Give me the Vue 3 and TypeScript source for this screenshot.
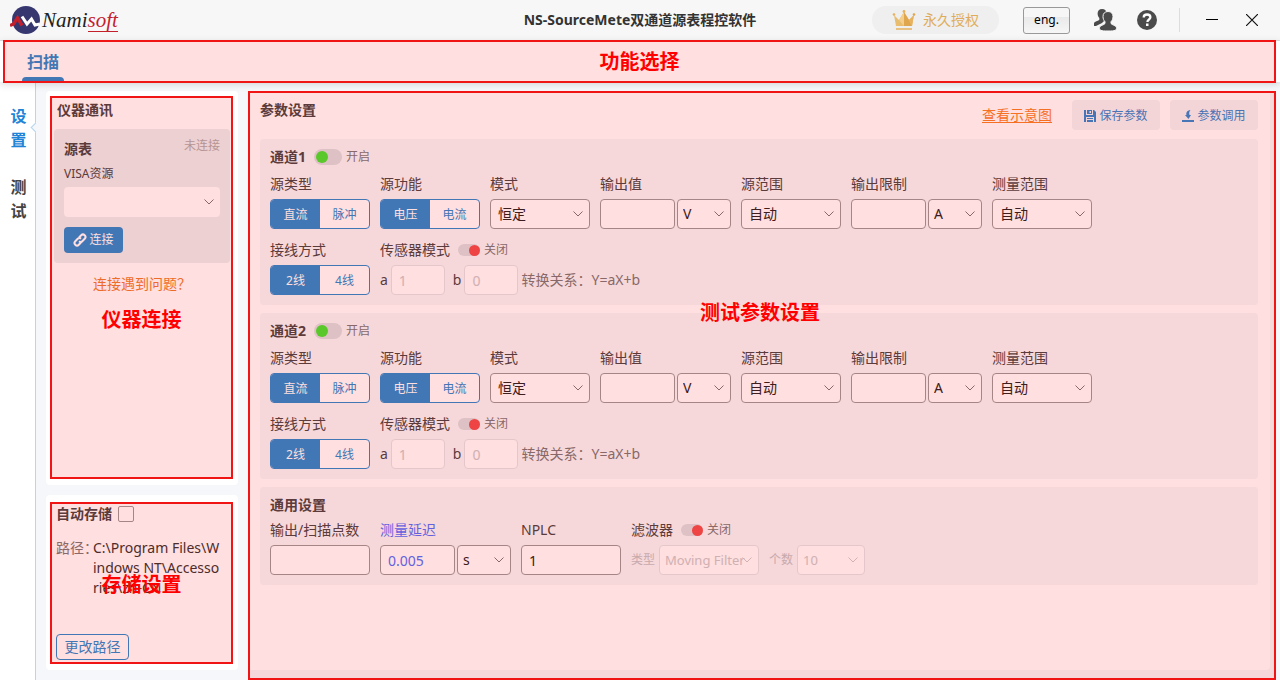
<script setup lang="ts">
import { reactive, ref } from 'vue'

interface Channel {
  id: number
  enabled: boolean
  sourceType: string
  sourceFunction: string
  mode: string
  output: string
  outputUnit: string
  sourceRange: string
  limit: string
  limitUnit: string
  measureRange: string
  wiring: string
  sensorOff: boolean
  a: string
  b: string
}

const createChannel = (id: number): Channel => ({
  id,
  enabled: true,
  sourceType: '直流',
  sourceFunction: '电压',
  mode: '恒定',
  output: '',
  outputUnit: 'V',
  sourceRange: '自动',
  limit: '',
  limitUnit: 'A',
  measureRange: '自动',
  wiring: '2线',
  sensorOff: true,
  a: '1',
  b: '0',
})

const channels = reactive<Channel[]>([createChannel(1), createChannel(2)])

const general = reactive({
  points: '',
  delay: '0.005',
  delayUnit: 's',
  nplc: '1',
  filterOff: true,
  filterType: 'Moving Filter',
  filterCount: '10',
})

const views = ['设置', '测试']
const activeView = ref('设置')
const visa = ref('')
const autoSave = ref(false)
const savePath = 'C:\\Program Files\\Windows NT\\Accessories\\zh-CN'
</script>

<template>
  <div class="app">
    <header class="titlebar">
      <div class="brand">
        <svg class="brand-mark" viewBox="0 0 32 30" width="32" height="30" aria-hidden="true">
          <circle cx="16" cy="15" r="14" fill="#36376f" />
          <path d="M12 11.500 L17 19 L21.500 14 L25 20 L30 19" fill="none" stroke="#fff" stroke-width="3" />
          <path d="M0 20.500 L3.500 19 L7.500 13 L12 20.500" fill="none" stroke="#c4202b" stroke-width="3.400" />
        </svg>
        <span class="brand-name">Nami<span class="brand-accent">soft</span></span>
      </div>
      <h1 class="title">NS-SourceMete双通道源表程控软件</h1>
      <div class="tools">
        <span class="license">
          <svg viewBox="0 0 24 22" width="24" height="22" aria-hidden="true">
            <path d="M2 6 L7 11 L12 3 L17 11 L22 6 L20 17 H4 Z" fill="#e9bd6f" />
            <path d="M12 3 L17 11 L20 17 H12 Z" fill="#e0a64d" />
            <path d="M7 11 L12 3 V17 Z" fill="#f3cf8b" />
            <path d="M17 11 L22 6 L20 17 Z" fill="#e6b25d" />
            <path d="M4 20 H20" stroke="#e6b25d" stroke-width="1.500" />
            <circle cx="2" cy="5.500" r="1.300" fill="#e6b25d" />
            <circle cx="12" cy="2.500" r="1.400" fill="#e6b25d" />
            <circle cx="22" cy="5.500" r="1.300" fill="#e0a64d" />
          </svg>
          永久授权
        </span>
        <button class="lang" type="button">eng.</button>
        <button class="tool users" type="button" aria-label="用户">
          <svg viewBox="0 0 24 24" width="24" height="24" fill="#4b4b4b">
            <path d="M9 1c3 0 4.600 1.800 4.600 4.600 0 2-.6 3.600-1.600 4.900v1.500l-3 3-6 3H1v-2.500c0-2 4.500-2.600 5.300-3.800V10C5.200 9 4.600 7.400 4.600 5.600 4.600 2.800 6.200 1 9 1z" />
            <path d="M15 3.500c3.200 0 5 2 5 5 0 2.200-.8 4-2 5.200v1.800c.8 1.400 5.500 2 5.500 4.200 0 2.600-1 3.300-8.500 3.300s-8.500-.7-8.500-3.300c0-2.200 4.700-2.800 5.500-4.200v-1.800c-1.200-1.200-2-3-2-5.200 0-3 1.800-5 5-5z" stroke="#f7f7f7" stroke-width="1" />
          </svg>
        </button>
        <button class="tool help" type="button" aria-label="帮助">
          <svg viewBox="0 0 20 20" width="20" height="20">
            <circle cx="10" cy="10" r="10" fill="#4b4b4b" />
            <path d="M6.700 7.500C6.700 5.500 8 4.500 10 4.500s3.400 1.100 3.400 2.800c0 2.200-3 2.200-3 4.700" fill="none" stroke="#fff" stroke-width="2.300" />
            <rect x="9" y="13.500" width="2.500" height="2.500" fill="#fff" />
          </svg>
        </button>
        <span class="divider"></span>
        <button class="tool minimise" type="button" aria-label="最小化">
          <svg viewBox="0 0 12 12" width="12" height="12"><path d="M0 5.500 H12" stroke="#000" /></svg>
        </button>
        <button class="tool close" type="button" aria-label="关闭窗口">
          <svg viewBox="0 0 12 12" width="12" height="12"><path d="M0 0 L12 12 M12 0 L0 12" stroke="#111" stroke-width="1.200" /></svg>
        </button>
      </div>
    </header>

    <nav class="functions" aria-label="功能选择">
      <button class="function-tab" type="button">扫描</button>
      <div class="frame frame-functions">功能选择</div>
    </nav>

    <div class="body">
      <nav class="views" aria-label="视图">
        <button
          v-for="view in views"
          :key="view"
          type="button"
          class="view"
          :class="{ active: view === activeView }"
          @click="activeView = view"
        >{{ view }}</button>
      </nav>

      <aside class="side">
        <section class="card connection">
          <h2>仪器通讯</h2>
          <div class="device">
            <div class="device-head">
              <h3>源表</h3>
              <span>未连接</span>
            </div>
            <label class="visa-label" for="visa">VISA资源</label>
            <select id="visa" v-model="visa" class="visa"><option value=""></option></select>
            <button class="connect" type="button">
              <svg viewBox="0 0 14 14" width="14" height="14" fill="none" stroke="currentColor" stroke-width="2">
                <path d="M6 4.500 L8.200 2.300 a2.400 2.400 0 0 1 3.500 3.500 L9.300 8.200 a2.400 2.400 0 0 1 -3.300 .1" />
                <path d="M8 9.500 L5.800 11.700 a2.400 2.400 0 0 1 -3.500 -3.500 L4.700 5.800 a2.400 2.400 0 0 1 3.300 -.1" />
              </svg>
              连接
            </button>
          </div>
          <a class="trouble" href="#">连接遇到问题？</a>
          <div class="frame frame-connection">仪器连接</div>
        </section>

        <section class="card storage">
          <label class="auto-save">自动存储<input v-model="autoSave" type="checkbox" class="check" /></label>
          <div class="path">
            <span class="path-label">路径：</span>
            <span class="path-value">{{ savePath }}</span>
          </div>
          <button class="change-path" type="button">更改路径</button>
          <div class="frame frame-storage">存储设置</div>
        </section>
      </aside>

      <main class="panel">
        <div class="panel-head">
          <h2>参数设置</h2>
          <a class="diagram" href="#">查看示意图</a>
          <button class="action" type="button">
            <svg viewBox="0 0 12 12" width="12" height="12" fill="currentColor">
              <path fill-rule="evenodd" d="M0 0 H2 V5 H9 V0 H10 L12 2 V12 H10 V7 H2 V12 H0 Z M3 0 H8 V4 H3 Z M5.500 1 V3 H7 V1 Z M3 8 H9 V9 H3 Z M3 10 H9 V12 H3 Z" />
            </svg>
            保存参数
          </button>
          <button class="action" type="button">
            <svg viewBox="0 0 12 12" width="12" height="12" fill="currentColor">
              <path d="M0 10 H12 V12 H0 Z M8.500 0 C4.500 .5 4 3 4.500 5 H3 L6.500 9 L9 5 H7.500 C7 3.500 7 1.500 8.500 0 Z" />
            </svg>
            参数调用
          </button>
        </div>

        <section v-for="ch in channels" :key="ch.id" class="group">
          <div class="group-title">
            <h3>通道{{ ch.id }}</h3>
            <label class="switch-label">
              <input v-model="ch.enabled" type="checkbox" class="switch large" />开启
            </label>
          </div>
          <div class="fields">
            <div class="field" role="group" aria-label="源类型">
              <span class="label">源类型</span>
              <div class="segment">
                <button v-for="o in ['直流', '脉冲']" :key="o" type="button" :class="{ on: ch.sourceType === o }" @click="ch.sourceType = o">{{ o }}</button>
              </div>
            </div>
            <div class="field" role="group" aria-label="源功能">
              <span class="label">源功能</span>
              <div class="segment">
                <button v-for="o in ['电压', '电流']" :key="o" type="button" :class="{ on: ch.sourceFunction === o }" @click="ch.sourceFunction = o">{{ o }}</button>
              </div>
            </div>
            <div class="field">
              <label class="label" :for="`mode${ch.id}`">模式</label>
              <select :id="`mode${ch.id}`" v-model="ch.mode" class="control wide"><option>恒定</option></select>
            </div>
            <div class="field">
              <label class="label" :for="`output${ch.id}`">输出值</label>
              <div class="pair">
                <input :id="`output${ch.id}`" v-model="ch.output" type="text" class="control medium" />
                <select v-model="ch.outputUnit" class="control unit" aria-label="输出单位"><option>V</option></select>
              </div>
            </div>
            <div class="field">
              <label class="label" :for="`range${ch.id}`">源范围</label>
              <select :id="`range${ch.id}`" v-model="ch.sourceRange" class="control wide"><option>自动</option></select>
            </div>
            <div class="field">
              <label class="label" :for="`limit${ch.id}`">输出限制</label>
              <div class="pair">
                <input :id="`limit${ch.id}`" v-model="ch.limit" type="text" class="control medium" />
                <select v-model="ch.limitUnit" class="control unit" aria-label="限制单位"><option>A</option></select>
              </div>
            </div>
            <div class="field">
              <label class="label" :for="`measure${ch.id}`">测量范围</label>
              <select :id="`measure${ch.id}`" v-model="ch.measureRange" class="control wide"><option>自动</option></select>
            </div>
          </div>
          <div class="fields">
            <div class="field" role="group" aria-label="接线方式">
              <span class="label">接线方式</span>
              <div class="segment">
                <button v-for="o in ['2线', '4线']" :key="o" type="button" :class="{ on: ch.wiring === o }" @click="ch.wiring = o">{{ o }}</button>
              </div>
            </div>
            <div class="field">
              <div class="label with-switch">
                传感器模式
                <label class="switch-label">
                  <input v-model="ch.sensorOff" type="checkbox" class="switch small" />关闭
                </label>
              </div>
              <div class="formula">
                <label :for="`a${ch.id}`">a</label>
                <input :id="`a${ch.id}`" v-model="ch.a" type="text" class="control coefficient" disabled />
                <label class="second" :for="`b${ch.id}`">b</label>
                <input :id="`b${ch.id}`" v-model="ch.b" type="text" class="control coefficient" disabled />
                <span class="relation">转换关系：Y=aX+b</span>
              </div>
            </div>
          </div>
        </section>

        <section class="group general">
          <div class="group-title"><h3>通用设置</h3></div>
          <div class="fields">
            <div class="field">
              <label class="label" for="points">输出/扫描点数</label>
              <input id="points" v-model="general.points" type="text" class="control wide" />
            </div>
            <div class="field">
              <label class="label accent" for="delay">测量延迟</label>
              <div class="pair">
                <input id="delay" v-model="general.delay" type="text" class="control medium accent" />
                <select v-model="general.delayUnit" class="control unit" aria-label="延迟单位"><option>s</option></select>
              </div>
            </div>
            <div class="field">
              <label class="label" for="nplc">NPLC</label>
              <input id="nplc" v-model="general.nplc" type="text" class="control wide" />
            </div>
            <div class="field">
              <div class="label with-switch">
                滤波器
                <label class="switch-label">
                  <input v-model="general.filterOff" type="checkbox" class="switch small" />关闭
                </label>
              </div>
              <div class="filter">
                <label for="filter-type">类型</label>
                <select id="filter-type" v-model="general.filterType" class="control filter-type" disabled><option>Moving Filter</option></select>
                <label class="second" for="filter-count">个数</label>
                <select id="filter-count" v-model="general.filterCount" class="control filter-count" disabled><option>10</option></select>
              </div>
            </div>
          </div>
        </section>
        <div class="frame frame-panel">测试参数设置</div>
      </main>
    </div>
  </div>
</template>

<style>
body {
  background: #f5f7fa;
}
</style>

<style scoped>
.app,
.app * {
  box-sizing: border-box;
}

.app {
  display: flex;
  flex-direction: column;
  min-height: 100vh;
  overflow: hidden;
  background: #f5f7fa;
  color: #444;
  font: 14px/20px "Noto Sans", "Noto Sans CJK SC", sans-serif;
}

h1, h2, h3 {
  margin: 0;
  font-size: 14px;
  font-weight: 700;
}

button, input, select {
  margin: 0;
  font: inherit;
}

button {
  padding: 0;
  border: 0;
  background: none;
  cursor: pointer;
}

svg {
  display: block;
  flex: none;
}

/* Title bar */
.titlebar {
  display: grid;
  grid-template-columns: 1fr auto 1fr;
  align-items: center;
  height: 41px;
  border-bottom: 1px solid #ddd;
  background: #f7f7f7;
}

.brand {
  display: flex;
  align-items: center;
  padding-left: 10px;
}

.brand-name {
  color: #222;
  font: italic 21px/24px "Liberation Serif", serif;
}

.brand-accent {
  display: inline-block;
  border-bottom: 1px solid #c4202b;
  color: #c4202b;
  line-height: 22px;
}

.title {
  color: #333;
}

.tools {
  display: flex;
  align-items: center;
  justify-content: flex-end;
  padding-right: 22px;
}

.license {
  display: flex;
  align-items: center;
  justify-content: center;
  gap: 7px;
  width: 127px;
  height: 28px;
  border-radius: 14px;
  background: #efefef;
  color: #e0ac5a;
}

.lang {
  width: 47px;
  height: 27px;
  margin: 0 23px 0 24px;
  border: 1px solid #999;
  border-radius: 3px;
  background: linear-gradient(#f6f6f6 35%, #e9e9e9 36%, #f6f6f6);
  color: #000;
  font-size: 12px;
}

.help {
  margin-left: 20px;
}

.divider {
  width: 1px;
  height: 24px;
  margin: 0 26px 0 22px;
  background: #ddd;
}

.close {
  margin-left: 28px;
}

/* Function bar */
.functions {
  position: relative;
  z-index: 2;
  display: flex;
  height: 41px;
  padding-left: 22px;
  background: #fff;
  box-shadow: 0 2px 8px rgba(0, 0, 0, 0.16);
}

.function-tab {
  display: flex;
  flex-direction: column;
  align-items: center;
  justify-content: space-between;
  width: 42px;
  padding-top: 11px;
  color: #2788cf;
  font-size: 16px;
  font-weight: 700;
}

.function-tab::after {
  width: 100%;
  height: 5px;
  border-radius: 4px 4px 0 0;
  background: #2788cf;
  content: "";
}

/* Highlight frames lying over each region */
.frame {
  position: absolute;
  z-index: 3;
  display: flex;
  justify-content: center;
  border: 2px solid #f01414;
  background: rgba(255, 0, 0, 0.125);
  color: #f00;
  font-size: 20px;
  font-weight: 700;
  line-height: 30px;
  pointer-events: none;
}

.frame-functions {
  inset: -1px 4px -1px 3px;
  align-items: center;
}

.frame-connection {
  inset: 5px 5px 6px 4px;
  padding-top: 207px;
}

.frame-storage {
  inset: 7px 5px 6px 4px;
  align-items: center;
  padding-top: 4px;
}

.frame-panel {
  inset: 0 -6px -10px 0;
  padding: 205px 4px 0 0;
}

/* Body */
.body {
  display: flex;
  flex: 1;
}

.views {
  position: relative;
  display: flex;
  flex-direction: column;
  flex: none;
  align-items: center;
  gap: 23px;
  width: 36px;
  padding: 22px 0 0 2px;
  border-right: 1px solid #b5d6ee;
  background: #fff;
}

.views::after {
  position: absolute;
  top: 42px;
  right: -4px;
  width: 6px;
  height: 6px;
  border-bottom: 1px solid #b5d6ee;
  border-left: 1px solid #b5d6ee;
  background: #f5f7fa;
  content: "";
  transform: rotate(45deg);
}

.view {
  width: 16px;
  color: #444;
  font-size: 16px;
  font-weight: 700;
  line-height: 24px;
}

.view.active {
  color: #1f84d6;
}

.side {
  display: flex;
  flex: none;
  flex-direction: column;
  gap: 10px;
  width: 192px;
  margin: 9px 10px 10px;
}

.card {
  position: relative;
  padding: 8px;
  border-radius: 4px;
  background: #fff;
}

.connection {
  flex: 1;
  text-align: center;
}

.connection h2 {
  padding: 1px 3px 9px;
  text-align: left;
}

.device {
  display: flex;
  flex-direction: column;
  align-items: flex-start;
  height: 134px;
  padding: 10px;
  border-radius: 4px;
  background: #ebeef0;
}

.device-head {
  display: flex;
  justify-content: space-between;
  align-self: stretch;
}

.device-head span {
  color: #aaa;
  font-size: 12px;
  line-height: 14px;
}

.visa-label {
  margin: 5px 0 3px;
  font-size: 12px;
}

select {
  appearance: none;
  background: #fff url("data:image/svg+xml,%3Csvg xmlns='http://www.w3.org/2000/svg' width='10' height='6'%3E%3Cpath d='M.5 .5 5 5 9.500 .5' fill='none' stroke='%23777'/%3E%3C/svg%3E") right 6px center no-repeat;
}

.visa {
  width: 100%;
  height: 30px;
  border: 0;
  border-radius: 4px;
}

.connect {
  display: flex;
  align-items: center;
  justify-content: center;
  gap: 2px;
  width: 59px;
  height: 26px;
  margin-top: 10px;
  border-radius: 4px;
  background: #2788cf;
  color: #fff;
  font-size: 12px;
}

.trouble {
  display: inline-block;
  margin-top: 11px;
  color: #ec7c30;
  text-decoration: none;
}

.storage {
  height: 175px;
  padding: 9px 10px;
}

.auto-save {
  display: flex;
  align-items: center;
  gap: 6px;
  font-weight: 700;
}

.check {
  width: 16px;
  height: 16px;
  border: 1px solid #999;
  border-radius: 2px;
  background: #fff;
  appearance: none;
}

.path {
  display: flex;
  height: 96px;
  margin-top: 14px;
  padding-right: 6px;
}

.path-label {
  flex: none;
  width: 37px;
  color: #777;
  font-feature-settings: "halt";
  white-space: nowrap;
}

.path-value {
  color: #333;
  word-break: break-all;
}

.change-path {
  width: 73px;
  height: 26px;
  border: 1px solid #2788cf;
  border-radius: 4px;
  color: #2788cf;
}

/* Parameter panel */
.panel {
  position: relative;
  flex: 1;
  margin: 9px 10px 10px 0;
  padding: 0 12px;
  border-radius: 4px;
  background: #fff;
}

.panel-head {
  display: flex;
  align-items: center;
  gap: 10px;
  height: 48px;
}

.panel-head h2 {
  flex: 1;
  align-self: flex-start;
  padding-top: 9px;
}

.diagram {
  margin-right: 10px;
  color: #f5802a;
  text-underline-offset: 2px;
}

.action {
  display: flex;
  align-items: center;
  justify-content: center;
  gap: 3px;
  width: 88px;
  height: 30px;
  padding-top: 1px;
  border-radius: 4px;
  background: #f2f4f7;
  color: #2d86cf;
  font-size: 12px;
}

.group {
  margin-bottom: 8px;
  padding: 6px 10px 10px;
  border-radius: 4px;
  background: #f5f7fa;
}

.group-title {
  display: flex;
  align-items: center;
  gap: 8px;
  height: 24px;
  margin-bottom: 5px;
}

.switch-label {
  display: flex;
  align-items: center;
  gap: 4px;
  color: #777;
  font-size: 12px;
}

.switch {
  display: flex;
  align-items: center;
  border-radius: 8px;
  background: #dadde0;
  appearance: none;
}

.switch::before {
  border-radius: 50%;
  content: "";
}

.large {
  width: 28px;
  height: 16px;
  padding: 0 2px;
}

.large::before {
  width: 12px;
  height: 12px;
  background: #43e531;
}

.small {
  justify-content: flex-end;
  width: 22px;
  height: 12px;
}

.small::before {
  width: 11px;
  height: 11px;
  background: #ec4e4e;
}

.fields {
  display: flex;
  gap: 10px;
}

.fields + .fields {
  margin-top: 11px;
}

.field {
  display: flex;
  flex-direction: column;
  gap: 5px;
}

.label {
  height: 20px;
  white-space: nowrap;
}

.with-switch {
  display: flex;
  align-items: center;
  gap: 8px;
}

.segment {
  display: flex;
  width: 100px;
  height: 30px;
  overflow: hidden;
  border: 1px solid #2788cf;
  border-radius: 4px;
  background: #fff;
}

.segment button {
  flex: 1;
  padding-top: 2px;
  color: #2788cf;
  font-size: 12px;
}

.segment .on {
  background: #2788cf;
  color: #fff;
}

.pair {
  display: flex;
  gap: 2px;
}

.control {
  height: 30px;
  padding: 0 7px;
  border: 1px solid #999;
  border-radius: 4px;
  background-color: #fff;
  color: #222;
}

.wide {
  width: 100px;
}

.medium {
  width: 75px;
}

.unit {
  width: 54px;
  padding: 0 5px;
}

.coefficient {
  width: 54px;
}

.control:disabled {
  border-color: #e2e4e8;
  color: #c8cacd;
  opacity: 1;
}

select:disabled {
  background-image: url("data:image/svg+xml,%3Csvg xmlns='http://www.w3.org/2000/svg' width='10' height='6'%3E%3Cpath d='M.5 .5 5 5 9.500 .5' fill='none' stroke='%23ccc'/%3E%3C/svg%3E");
}

.label.accent,
.control.accent {
  color: #4d6fff;
}

.formula,
.filter {
  display: flex;
  align-items: center;
  gap: 3px;
}

.formula .second {
  margin-left: 5px;
}

.relation {
  color: #777;
  white-space: nowrap;
}

.general {
  margin-bottom: 0;
}

.general .group-title {
  margin-bottom: 3px;
}

.filter {
  gap: 4px;
  color: #c0c2c5;
  font-size: 12px;
}

.filter .second {
  margin-left: 6px;
}

.filter .control {
  padding: 0 5px;
  font-size: 13px;
}

.filter-type {
  width: 100px;
}

.filter-count {
  width: 68px;
}
</style>
